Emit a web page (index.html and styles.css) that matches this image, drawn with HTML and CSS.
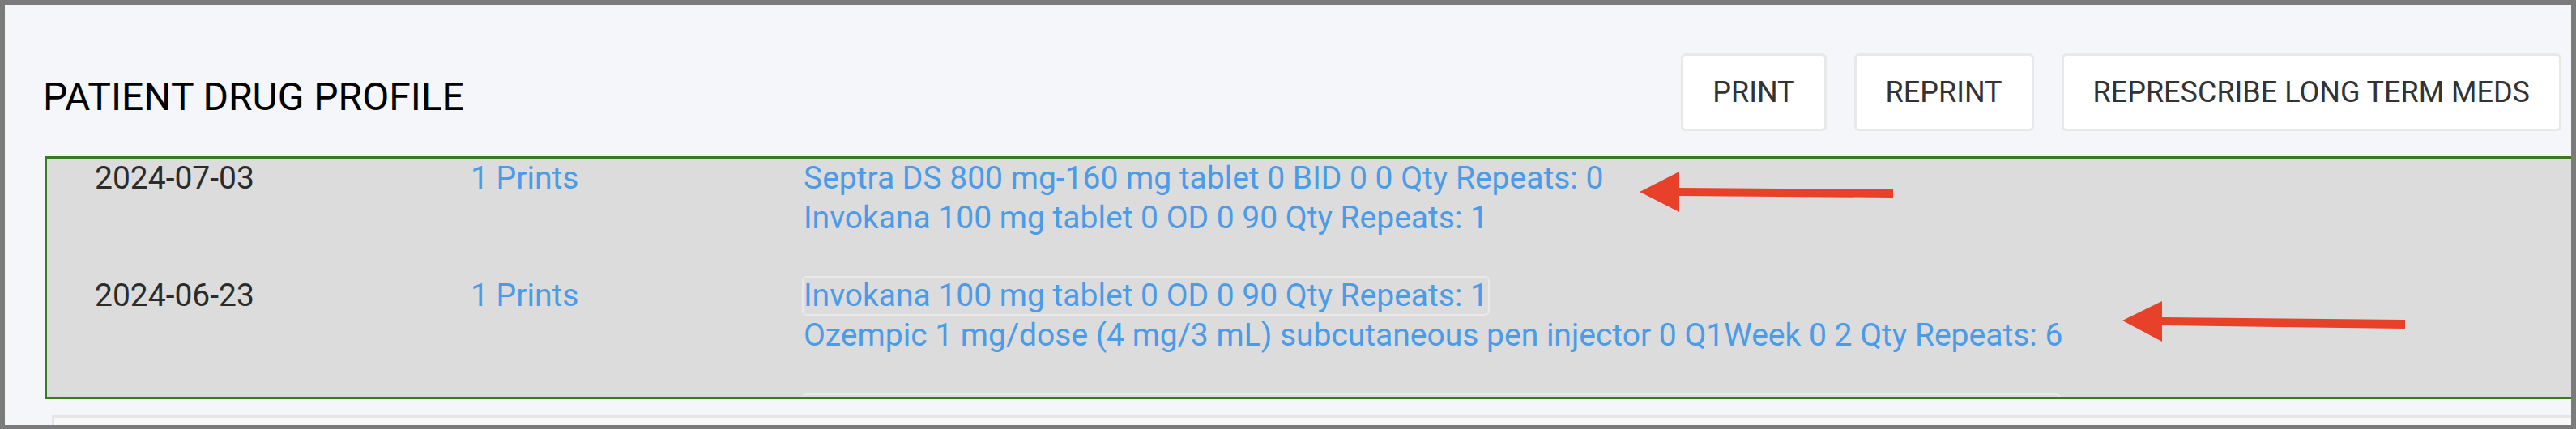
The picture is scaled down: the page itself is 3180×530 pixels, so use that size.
FILE: index.html
```html
<!DOCTYPE html>
<html lang="en">
<head>
    <meta charset="UTF-8">
    <title>Patient Drug Profile</title>
    <link rel="stylesheet" href="styles.css">
</head>
<body>

    <div class="frame">
        <div class="header">
            <h1>PATIENT DRUG PROFILE</h1>
            <div class="actions">
                <button>PRINT</button>
                <button>REPRINT</button>
                <button>REPRESCRIBE LONG TERM MEDS</button>
            </div>
        </div>

        <div class="history">
            <div class="row">
                <div class="date">2024-07-03</div>
                <div class="prints">1 Prints</div>
                <div class="meds">
                    <div class="rx">Septra DS 800 mg-160 mg tablet 0 BID 0 0 Qty Repeats: 0</div>
                    <div class="rx">Invokana 100 mg tablet 0 OD 0 90 Qty Repeats: 1</div>
                </div>
            </div>
            <div class="row">
                <div class="date">2024-06-23</div>
                <div class="prints">1 Prints</div>
                <div class="meds">
                    <div class="rx selected">Invokana 100 mg tablet 0 OD 0 90 Qty Repeats: 1</div>
                    <div class="rx">Ozempic 1 mg/dose (4 mg/3 mL) subcutaneous pen injector 0 Q1Week 0 2 Qty Repeats: 6</div>
                </div>
            </div>
            <div class="row">
                <div class="date"></div>
                <div class="prints"></div>
                <div class="meds">
                    <div class="rx selected next"></div>
                </div>
            </div>
        </div>

        <div class="footer-box"></div>
    </div>

    <!-- red pointer arrows drawn over the list -->
    <svg class="marks" width="3180" height="530" viewBox="0 0 3180 530">
        <polygon points="2024,237 2073,212 2073,232 2337,234 2337,244 2073,242 2073,262" fill="#e8412a"/>
        <polygon points="2620,396 2669,372 2669,392 2969,395 2969,406 2669,402 2669,422" fill="#e8412a"/>
    </svg>

</body>
</html>
```

FILE: styles.css
```css
body {
    margin: 0;
    padding: 0;
    font-family: Roboto, "Liberation Sans", sans-serif;
    position: relative;
    width: 3180px;
    height: 530px;
    overflow: hidden;
}

.frame {
    box-sizing: border-box;
    width: 3180px;
    height: 530px;
    border: 6px solid #7b7b7b;
    border-bottom-width: 5px;
    background: #f4f6fa;
    overflow: hidden;
}

.header {
    display: flex;
    align-items: center;
    justify-content: space-between;
    padding: 60px 12px 31px 47px;
}

h1 {
    margin: 11px 0 0 0;
    font-size: 48px;
    font-weight: 400;
    line-height: 56px;
    color: #000;
}

.actions {
    display: flex;
    gap: 34px;
}

button {
    font-family: Roboto, "Liberation Sans", sans-serif;
    font-size: 36px;
    line-height: 42px;
    color: #333;
    background: #fff;
    border: 3px solid #e8e8e8;
    border-radius: 6px;
    padding: 24px 36px;
    cursor: pointer;
}

.history {
    height: 294px;
    margin-left: 49px;
    border: 3px solid #3a7a23;
    border-right: 0;
    background: #dcdcdc;
    overflow: hidden;
    padding-left: 59px;
}

.row {
    display: grid;
    grid-template-columns: 464px 407px auto;
    margin-bottom: 47px;
    font-size: 39px;
}

.date {
    line-height: 49px;
    color: #2b2b2b;
}

.prints {
    line-height: 49px;
    color: #4a9be8;
}

.meds {
    display: flex;
    flex-direction: column;
    align-items: flex-start;
    margin-left: 2px;
}

.rx {
    line-height: 45px;
    color: #4a9be8;
    border: 2px solid transparent;
    border-radius: 6px;
    white-space: nowrap;
}

.rx.selected {
    border-color: #e9e9e9;
}

.rx.next {
    width: 1550px;
    height: 45px;
}

.footer-box {
    height: 40px;
    margin: 20px 0 0 58px;
    border: 3px solid #e5e5e5;
    border-right: 0;
    background: #f8f8f8;
}

.marks {
    position: absolute;
    top: 0;
    left: 0;
    pointer-events: none;
}
```
